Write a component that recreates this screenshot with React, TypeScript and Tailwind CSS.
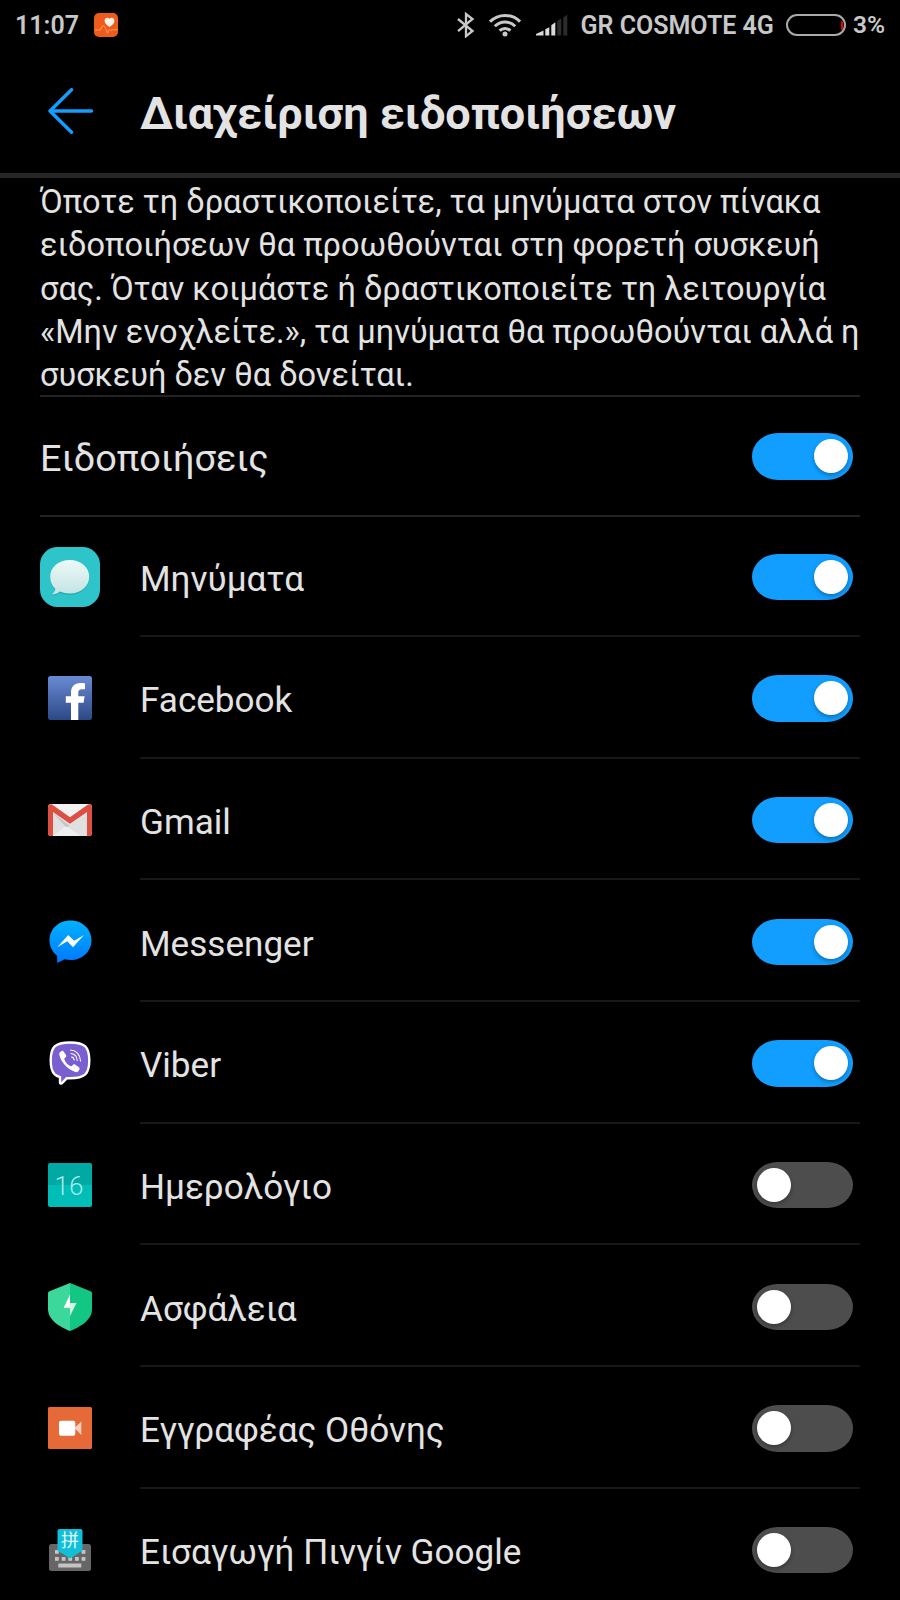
import type { ReactNode } from "react";

interface AppItem {
  name: string;
  icon: ReactNode;
  enabled: boolean;
}

function Toggle({ on }: { on: boolean }) {
  return (
    <div
      className={`flex h-[46.5px] w-[101.5px] shrink-0 items-center rounded-[26px/23.25px] px-[5px] ${
        on ? "justify-end bg-[#119eff]" : "justify-start bg-[#4d4d4d]"
      }`}
    >
      <div className="h-[34px] w-[34px] rounded-full bg-white shadow-[0_2px_4px_rgba(0,0,0,0.3)]" />
    </div>
  );
}

function MessagesIcon() {
  return (
    <svg className="h-[60px] w-[60px]" viewBox="0 0 60 60">
      <defs>
        <linearGradient id="msg" x1="0" y1="0" x2="0" y2="1">
          <stop offset="0" stopColor="#eef9f8" />
          <stop offset="1" stopColor="#c3e4e3" />
        </linearGradient>
      </defs>
      <rect width="60" height="60" rx="17.5" fill="#2ec5ca" />
      <path
        d="M29.7 14.6c11 0 19.5 7 19.5 16.4S40.7 48 29.7 48c-3.5 0-6.8-.7-9.6-1.9-2.2 1.5-4.7 2.4-7.6 2.2 1.8-1.3 2.9-3.2 3.1-5C12 40.2 10.2 36 10.2 31.4c0-9.4 8.5-16.4 19.5-16.4z"
        fill="#1c9fa6"
        opacity="0.6"
      />
      <path
        d="M29.7 13c11 0 19.5 7.2 19.5 16.8S40.7 46.6 29.7 46.6c-3.5 0-6.8-.7-9.6-2-2.2 1.6-4.7 2.9-8 2.7 1.9-1.3 3-3.2 3.3-5.2-3.3-3-5.2-7.4-5.2-12.3C10.2 20.2 18.7 13 29.7 13z"
        fill="url(#msg)"
      />
    </svg>
  );
}

function FacebookIcon() {
  return (
    <svg className="h-11 w-11" viewBox="0 0 44 44">
      <defs>
        <linearGradient id="fb" x1="0" y1="0" x2="0" y2="1">
          <stop offset="0" stopColor="#6a8ad4" />
          <stop offset="1" stopColor="#2c4886" />
        </linearGradient>
      </defs>
      <rect width="44" height="44" rx="2.5" fill="url(#fb)" />
      <path
        d="M23 44V26.7h-5.2v-6.4H23v-3.6C23 10.5 26.5 7 32.2 7c1.8 0 3.6.1 4.8.3v5.9h-3.2c-2.6 0-3.5 1.3-3.5 3.4v3.7h6.3l-1 6.4h-5.3V44z"
        fill="#fff"
      />
    </svg>
  );
}

function GmailIcon() {
  return (
    <svg className="h-8 w-11" viewBox="0 0 44 32">
      <path d="M3 0h38a3 3 0 0 1 3 3v26a3 3 0 0 1-3 3H3a3 3 0 0 1-3-3V3a3 3 0 0 1 3-3z" fill="#e0e0e0" />
      <path d="M5 32l13-10 15 10z" fill="#eeeeee" />
      <path d="M5 9l17 13-4 1z" fill="#c4c4c4" />
      <path d="M4 0h36L22 13.5z" fill="#f2f2f2" />
      <path
        d="M0 3.2C0 .8 2.6-.5 4.6.9L22 13.2 39.4.9C41.4-.5 44 .8 44 3.2V29a3 3 0 0 1-3 3h-2V8L22 19.7 5 8v24H3a3 3 0 0 1-3-3z"
        fill="#dd4f43"
      />
    </svg>
  );
}

function MessengerIcon() {
  return (
    <svg className="h-[43px] w-[43px]" viewBox="0 0 43 43">
      <defs>
        <linearGradient id="msgr" x1="0" y1="0" x2="0" y2="1">
          <stop offset="0" stopColor="#00b2ff" />
          <stop offset="1" stopColor="#0078ff" />
        </linearGradient>
      </defs>
      <path
        d="M21.5.5c11.8 0 21 8.6 21 19.8s-9.2 19.8-21 19.8c-2 0-4-.3-5.9-.8L8.2 43v-7.2C3.5 32.1.5 26.7.5 20.3.5 9.1 9.7.5 21.5.5z"
        fill="url(#msgr)"
      />
      <path d="M8.2 27.3L19.2 15l6 5.7L35 15 24 27.3l-5.7-6z" fill="#fff" />
    </svg>
  );
}

function ViberIcon() {
  return (
    <svg className="mb-[1px] h-[44px] w-[42px]" viewBox="0 0 42 44">
      <path
        d="M21 1.5c7 0 12 .8 15.3 3.9 3 2.9 4 7.6 4 14s-1 11-4 14C33.3 36.2 28 37.3 21 37.3h-3.3L13 42.2c-.8.8-2 .4-2-.8v-5.3c-2.3-.6-4-1.4-5.3-2.7-3-3-4-7.6-4-14s1-11.1 4-14C9 2.3 14 1.5 21 1.5z"
        fill="#7a5fd0"
        stroke="#fff"
        strokeWidth="2.4"
      />
      <path
        d="M12.6 10c-1.6.7-2.7 2.2-2.3 3.7C12.3 21.7 18.5 28.2 26.4 31c1.7.6 3-.6 3.8-2 .7-1.3.4-2.2-.6-3l-3.3-2.3c-1.2-.8-2.2-.3-2.9.7-.7.9-1.5 1-2.7.3-2.5-1.5-4.2-3.4-5.2-6-.3-.9 0-1.5.8-2.1 1-.7 1.3-1.7.7-2.7l-2.2-3.2c-.6-.8-1.4-1-2.2-.7z"
        fill="#fff"
      />
      <path
        d="M21.5 9c5.5.3 9.7 4.5 10 11M22 12.5c3.7.4 6 3 6.2 7M22.5 16c1.6.2 2.4 1.2 2.6 3"
        fill="none"
        stroke="#fff"
        strokeWidth="1.1"
        strokeLinecap="round"
      />
    </svg>
  );
}

function CalendarIcon() {
  return (
    <div className="flex h-11 w-11 items-center justify-center rounded-[2px] bg-linear-to-b from-[#00a9a4] from-50% to-[#00bdb8] to-50% pt-[1px] pr-[2px] text-[26px] leading-none font-light text-[#a5ebe7]">
      16
    </div>
  );
}

function SecurityIcon() {
  return (
    <svg className="h-[48px] w-11" viewBox="0 0 44 48">
      <path d="M22 0L1.5 8.3C.6 8.7 0 9.3 0 10.5V26c0 11 11 17.5 22 22z" fill="#3bd79b" />
      <path d="M22 0l20.5 8.3c.9.4 1.5 1 1.5 2.2V26c0 11-11 17.5-22 22z" fill="#13c683" />
      <path d="M22 20V33l6.5-13z" fill="#d3f5e7" />
      <path d="M22 11.5L15.7 24.8H22z" fill="#fff" />
    </svg>
  );
}

function RecorderIcon() {
  return (
    <svg className="h-[42px] w-11" viewBox="0 0 44 42">
      <rect width="44" height="42" rx="1.5" fill="#e66a37" />
      <path d="M26.5 21L33.3 14.5V28z" fill="#f7d2c3" />
      <rect x="11" y="13.7" width="16.3" height="15" rx="2" fill="#fff" />
    </svg>
  );
}

function PinyinIcon() {
  return (
    <svg className="h-[42px] w-[42px] overflow-visible" viewBox="0 0 42 42">
      <rect y="15" width="42" height="27" rx="2.5" fill="#666" />
      <g fill="#c4c4c4">
        {[6, 12.7, 19.3, 26, 32.6].map((x) => (
          <rect key={x} x={x} y="28" width="3.8" height="3.8" />
        ))}
        <rect x="6" y="21" width="3.8" height="3.8" />
        <rect x="32.6" y="21" width="3.8" height="3.8" />
        <rect x="9.3" y="34.5" width="23" height="4" />
      </g>
      <path d="M10.5 0h21a2 2 0 0 1 2 2v19.5L21 29.5 8.5 21.5V2a2 2 0 0 1 2-2z" fill="#12bfd9" />
      <text x="21" y="17.8" textAnchor="middle" fontSize="18" fill="#e4fafd" fontFamily="'Noto Sans CJK SC', sans-serif">
        拼
      </text>
    </svg>
  );
}

const apps: AppItem[] = [
  { name: "Μηνύματα", icon: <MessagesIcon />, enabled: true },
  { name: "Facebook", icon: <FacebookIcon />, enabled: true },
  { name: "Gmail", icon: <GmailIcon />, enabled: true },
  { name: "Messenger", icon: <MessengerIcon />, enabled: true },
  { name: "Viber", icon: <ViberIcon />, enabled: true },
  { name: "Ημερολόγιο", icon: <CalendarIcon />, enabled: false },
  { name: "Ασφάλεια", icon: <SecurityIcon />, enabled: false },
  { name: "Εγγραφέας Οθόνης", icon: <RecorderIcon />, enabled: false },
  { name: "Εισαγωγή Πινγίν Google", icon: <PinyinIcon />, enabled: false },
];

function StatusBar() {
  return (
    <div className="flex h-[50px] items-center pr-[15px] pl-[15px] text-[25px] leading-none font-semibold text-[#c8c8c8]">
      <span className="pt-[1px]">11:07</span>
      <svg className="ml-[15px] h-6 w-6" viewBox="0 0 24 24">
        <rect width="24" height="24" rx="5" fill="#ee5c1d" />
        <path d="M15.5 14c-3-2.2-4.9-3.9-4.9-6.2 0-3.2 3.6-4.1 4.9-1.7 1.3-2.4 4.9-1.5 4.9 1.7 0 2.3-1.9 4-4.9 6.2z" fill="#fff3ea" />
        <path
          d="M1 17h5.5l1.5-3.5 2-.8 1.5 2.5 2 5 2-4 1.5 1.5 1.5-1h5"
          fill="none"
          stroke="#ffa05f"
          strokeWidth="0.9"
        />
      </svg>

      <div className="flex flex-1 items-center justify-end">
        <svg className="h-[26px] w-[18px]" viewBox="0 0 18 26" fill="none" stroke="#c8c8c8" strokeWidth="2.3">
          <path d="M1 7l14.5 12L9 24.2V2l6.5 5L1 19.2" />
        </svg>
        <svg className="ml-[14px] h-6 w-8" viewBox="0 0 32 24" fill="none" stroke="#c8c8c8" strokeWidth="3">
          <path d="M1 8.7C9.5.3 22.5.3 31 8.7" />
          <path d="M5.8 13.3c5.8-5.7 14.6-5.7 20.4 0" />
          <path d="M10.6 17.7c3.1-3 7.7-3 10.8 0" />
          <circle cx="16" cy="20.9" r="2.5" fill="#c8c8c8" stroke="none" />
        </svg>
        <svg className="ml-[15px] h-[22px] w-8" viewBox="0 0 32 22">
          <g fill="#dadada">
            <path d="M0 21.5v-1.5l7.5-3.6v5.1z" />
            <path d="M9.3 21.5v-6.2l4-2v8.2z" />
            <path d="M15.3 21.5V11.3l4-3v13.2z" />
          </g>
          <path d="M21.3 21.5V7l4-2.5v17zM27.3 21.5V3.2l4-2.5v20.8z" fill="#2c2c2c" />
        </svg>
        <span className="ml-[13px] pt-[1px]">GR COSMOTE 4G</span>
        <div className="ml-[12px] flex h-[22px] w-[60px] items-center justify-end rounded-full border-2 border-[#aaa] pr-[1px]">
          <div className="h-[9px] w-[2px] rounded-r-full bg-[#f00000]" />
        </div>
        <span className="ml-[7px] pt-[1px] text-[24.5px]">3%</span>
      </div>
    </div>
  );
}

export default function App() {
  return (
    <div className="h-[1600px] w-[900px] overflow-hidden bg-black font-['Roboto','Noto_Sans',sans-serif] text-[#e3e3e3]">
      <StatusBar />

      {/* Title bar */}
      <header className="flex h-[128px] items-center border-b-[5px] border-[#262626] pl-12">
        <svg
          className="mb-[1px] h-[46px] w-[46px]"
          viewBox="0 0 46 46"
          fill="none"
          stroke="#119eff"
          strokeWidth="3.4"
          strokeLinecap="round"
          strokeLinejoin="round"
        >
          <path d="M23.5 1.7L2 23l21.5 21.3M2 23h41.5" />
        </svg>
        <h1 className="ml-[46px] pt-[5px] text-[45px] leading-[56px] font-bold">Διαχείριση ειδοποιήσεων</h1>
      </header>

      <main className="px-10">
        <p className="h-[219px] border-b-2 border-[#222] pt-[3px] text-[32.5px] leading-[43.3px] whitespace-nowrap">
          Όποτε τη δραστικοποιείτε, τα μηνύματα στον πίνακα
          <br />
          ειδοποιήσεων θα προωθούνται στη φορετή συσκευή
          <br />
          σας. Όταν κοιμάστε ή δραστικοποιείτε τη λειτουργία
          <br />
          «Μην ενοχλείτε.», τα μηνύματα θα προωθούνται αλλά η
          <br />
          συσκευή δεν θα δονείται.
        </p>

        <div className="flex h-[119.5px] items-center justify-between border-b-2 border-[#222] pt-[1px] pr-[6.7px]">
          <span className="pt-[6px] text-[37.8px] leading-none">Ειδοποιήσεις</span>
          <Toggle on />
        </div>

        {/* Per-app switches */}
        <ul>
          {apps.map((app) => (
            <li key={app.name} className="flex h-[121.67px] gap-10 pb-[1px]">
              <div className="flex w-[60px] items-center justify-center">{app.icon}</div>
              <div className="flex flex-1 items-center justify-between border-b-2 border-[#181818] pt-[2px] pr-[6.7px]">
                <span className="pt-[3.5px] text-[35.1px] leading-[42px]">{app.name}</span>
                <Toggle on={app.enabled} />
              </div>
            </li>
          ))}
        </ul>
      </main>
    </div>
  );
}
